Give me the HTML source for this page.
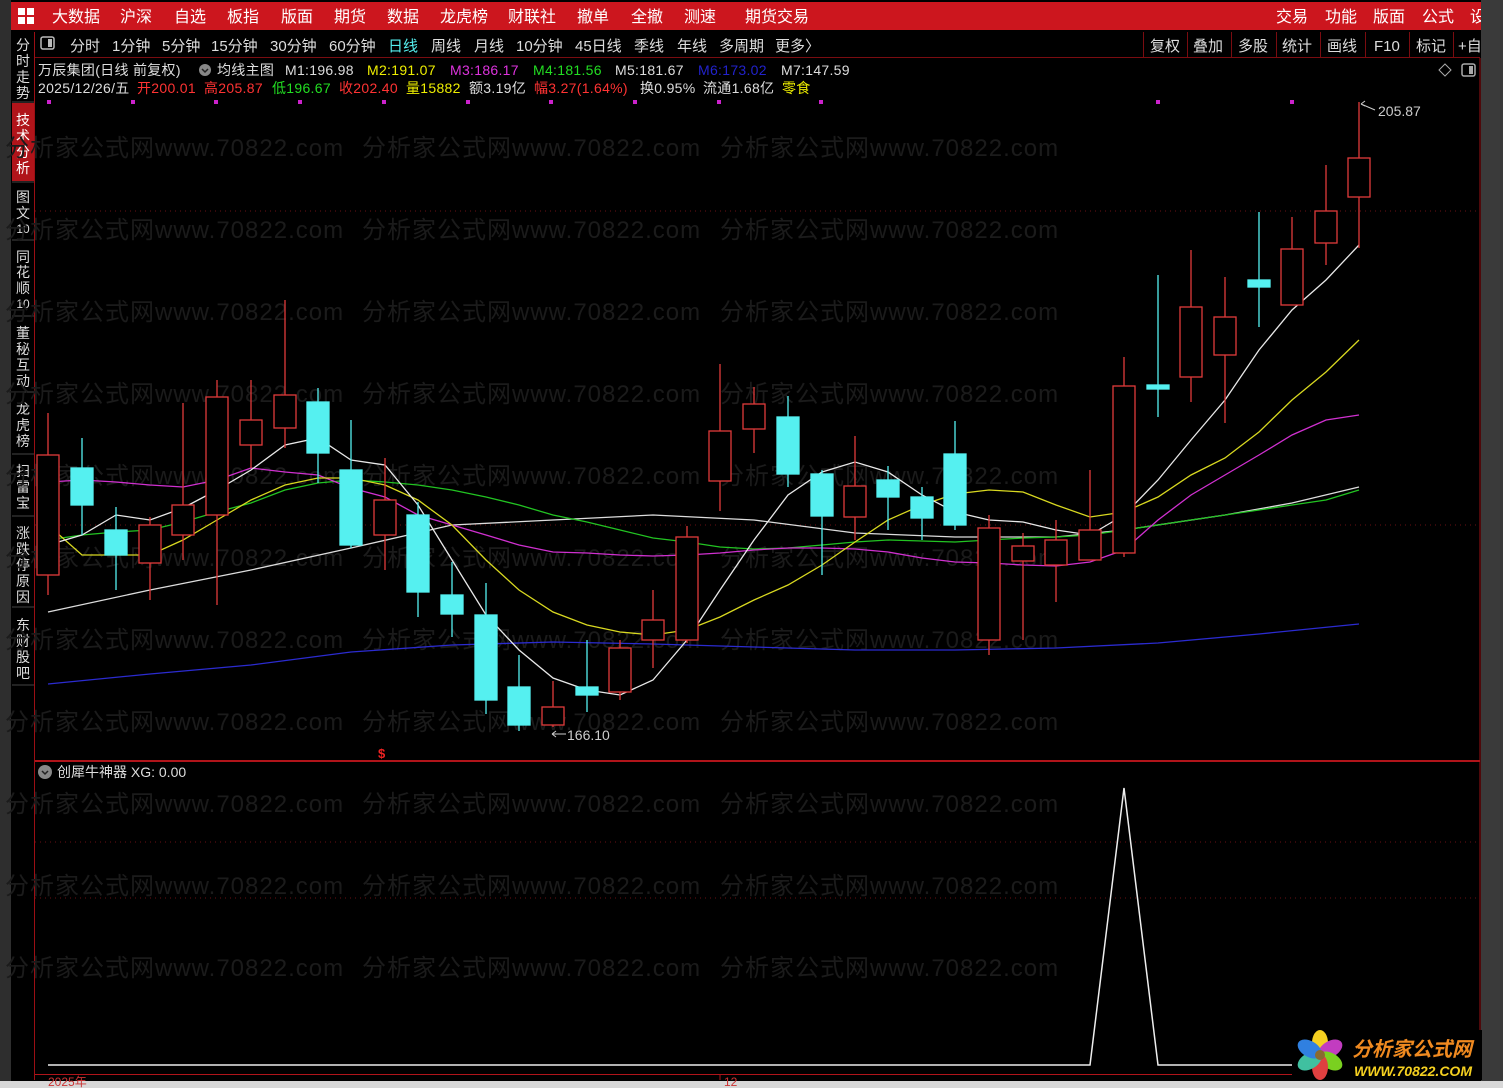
<!DOCTYPE html>
<html><head><meta charset="utf-8">
<style>
html,body{margin:0;padding:0;background:#000;}
body{width:1503px;height:1088px;overflow:hidden;position:relative;font-family:"Liberation Sans","Noto Sans CJK SC",sans-serif;}
svg text{font-family:"Liberation Sans","Noto Sans CJK SC",sans-serif;}
</style></head><body>
<svg width="1503" height="1088" viewBox="0 0 1503 1088" xmlns="http://www.w3.org/2000/svg" style="position:absolute;left:0;top:0">
<rect width="1503" height="1088" fill="#000"/>
<rect x="0" y="0" width="11" height="1088" fill="#2e2e2e"/>
<rect x="1481" y="0" width="22" height="1088" fill="#3a3a3a"/>
<rect x="0" y="1081" width="1503" height="7" fill="#d8d8d8"/>
<!-- top red bar -->
<rect x="11" y="2" width="1470" height="28" fill="#cc161e"/>
<g fill="#fff"><rect x="18" y="8" width="7" height="7"/><rect x="27" y="8" width="7" height="7"/><rect x="18" y="17" width="7" height="7"/><rect x="27" y="17" width="7" height="7"/></g>
<g fill="#fff" font-size="16">
<text x="52" y="22">大数据</text><text x="120" y="22">沪深</text><text x="174" y="22">自选</text><text x="227" y="22">板指</text><text x="281" y="22">版面</text><text x="334" y="22">期货</text><text x="387" y="22">数据</text><text x="440" y="22">龙虎榜</text><text x="508" y="22">财联社</text><text x="577" y="22">撤单</text><text x="631" y="22">全撤</text><text x="684" y="22">测速</text><text x="745" y="22">期货交易</text>
<text x="1276" y="22">交易</text><text x="1325" y="22">功能</text><text x="1373" y="22">版面</text><text x="1422" y="22">公式</text><text x="1470" y="22">设</text>
</g>
<rect x="1481" y="0" width="22" height="32" fill="#3a3a3a"/>
<!-- second bar -->
<line x1="35" y1="57.5" x2="1480" y2="57.5" stroke="#7a0c10"/>
<rect x="41" y="37" width="13" height="12" rx="2" fill="none" stroke="#bbb" stroke-width="1.5"/><rect x="48" y="39" width="4" height="8" fill="#bbb"/>
<g fill="#ddd" font-size="15">
<text x="70" y="51">分时</text><text x="112" y="51">1分钟</text><text x="162" y="51">5分钟</text><text x="211" y="51">15分钟</text><text x="270" y="51">30分钟</text><text x="329" y="51">60分钟</text><text x="388" y="51" fill="#5ee">日线</text><text x="431" y="51">周线</text><text x="474" y="51">月线</text><text x="516" y="51">10分钟</text><text x="575" y="51">45日线</text><text x="634" y="51">季线</text><text x="677" y="51">年线</text><text x="719" y="51">多周期</text><text x="775" y="51">更多〉</text>
<text x="1150" y="51">复权</text><text x="1193" y="51">叠加</text><text x="1238" y="51">多股</text><text x="1282" y="51">统计</text><text x="1327" y="51">画线</text><text x="1374" y="51">F10</text><text x="1416" y="51">标记</text><text x="1458" y="51">+自</text>
</g>
<g stroke="#7a0c10"><line x1="1143.5" y1="32" x2="1143.5" y2="57"/><line x1="1187.5" y1="32" x2="1187.5" y2="57"/><line x1="1231.5" y1="32" x2="1231.5" y2="57"/><line x1="1276.5" y1="32" x2="1276.5" y2="57"/><line x1="1320.5" y1="32" x2="1320.5" y2="57"/><line x1="1365.5" y1="32" x2="1365.5" y2="57"/><line x1="1409.5" y1="32" x2="1409.5" y2="57"/><line x1="1453.5" y1="32" x2="1453.5" y2="57"/></g>
<!-- left sidebar -->
<line x1="34.5" y1="32" x2="34.5" y2="1080" stroke="#9b0f14"/>
<rect x="12" y="103" width="22" height="78" fill="#b0141a"/>
<g fill="#ddd" font-size="14" text-anchor="middle">
<text x="23" y="50">分</text><text x="23" y="66">时</text><text x="23" y="82">走</text><text x="23" y="98">势</text>
<text x="23" y="125" fill="#fff">技</text><text x="23" y="141" fill="#fff">术</text><text x="23" y="157" fill="#fff">分</text><text x="23" y="173" fill="#fff">析</text>
<text x="23" y="202">图</text><text x="23" y="218">文</text><text x="23" y="233" font-size="12">10</text>
<text x="23" y="262">同</text><text x="23" y="277">花</text><text x="23" y="293">顺</text><text x="23" y="308" font-size="12">10</text>
<text x="23" y="338">董</text><text x="23" y="354">秘</text><text x="23" y="370">互</text><text x="23" y="386">动</text>
<text x="23" y="414">龙</text><text x="23" y="430">虎</text><text x="23" y="446">榜</text>
<text x="23" y="476">扫</text><text x="23" y="492">雷</text><text x="23" y="508">宝</text>
<text x="23" y="538">涨</text><text x="23" y="554">跌</text><text x="23" y="570">停</text><text x="23" y="586">原</text><text x="23" y="602">因</text>
<text x="23" y="630">东</text><text x="23" y="646">财</text><text x="23" y="662">股</text><text x="23" y="678">吧</text>
</g>
<g stroke="#444"><line x1="12" y1="102" x2="34" y2="102"/><line x1="12" y1="182" x2="34" y2="182"/><line x1="12" y1="240" x2="34" y2="240"/><line x1="12" y1="316" x2="34" y2="316"/><line x1="12" y1="392" x2="34" y2="392"/><line x1="12" y1="454" x2="34" y2="454"/><line x1="12" y1="516" x2="34" y2="516"/><line x1="12" y1="607" x2="34" y2="607"/><line x1="12" y1="685" x2="34" y2="685"/></g>
<!-- watermark -->
<g fill="#1b1b1b" font-size="24" letter-spacing="1">
<text x="5" y="156">分析家公式网www.70822.com</text><text x="362" y="156">分析家公式网www.70822.com</text><text x="720" y="156">分析家公式网www.70822.com</text>
<text x="5" y="238">分析家公式网www.70822.com</text><text x="362" y="238">分析家公式网www.70822.com</text><text x="720" y="238">分析家公式网www.70822.com</text>
<text x="5" y="320">分析家公式网www.70822.com</text><text x="362" y="320">分析家公式网www.70822.com</text><text x="720" y="320">分析家公式网www.70822.com</text>
<text x="5" y="402">分析家公式网www.70822.com</text><text x="362" y="402">分析家公式网www.70822.com</text><text x="720" y="402">分析家公式网www.70822.com</text>
<text x="5" y="484">分析家公式网www.70822.com</text><text x="362" y="484">分析家公式网www.70822.com</text><text x="720" y="484">分析家公式网www.70822.com</text>
<text x="5" y="566">分析家公式网www.70822.com</text><text x="362" y="566">分析家公式网www.70822.com</text><text x="720" y="566">分析家公式网www.70822.com</text>
<text x="5" y="648">分析家公式网www.70822.com</text><text x="362" y="648">分析家公式网www.70822.com</text><text x="720" y="648">分析家公式网www.70822.com</text>
<text x="5" y="730">分析家公式网www.70822.com</text><text x="362" y="730">分析家公式网www.70822.com</text><text x="720" y="730">分析家公式网www.70822.com</text>
<text x="5" y="812">分析家公式网www.70822.com</text><text x="362" y="812">分析家公式网www.70822.com</text><text x="720" y="812">分析家公式网www.70822.com</text>
<text x="5" y="894">分析家公式网www.70822.com</text><text x="362" y="894">分析家公式网www.70822.com</text><text x="720" y="894">分析家公式网www.70822.com</text>
<text x="5" y="976">分析家公式网www.70822.com</text><text x="362" y="976">分析家公式网www.70822.com</text><text x="720" y="976">分析家公式网www.70822.com</text>
</g>
<!-- frame -->
<line x1="1480" y1="58" x2="1480" y2="1080" stroke="#9b0f14"/>
<line x1="35" y1="761" x2="1480" y2="761" stroke="#b0141a" stroke-width="2"/>
<line x1="35" y1="1074.5" x2="1480" y2="1074.5" stroke="#b0141a"/>
<g stroke="#6a1014" stroke-dasharray="1,4"><line x1="35" y1="211" x2="1480" y2="211"/><line x1="35" y1="525" x2="1480" y2="525"/><line x1="35" y1="842" x2="1480" y2="842"/><line x1="35" y1="898" x2="1480" y2="898"/></g>
<!-- legend -->
<g font-size="14" letter-spacing="0.3">
<text x="38" y="75" fill="#ddd">万辰集团(日线 前复权)</text>
<circle cx="205" cy="70" r="6" fill="#888"/><path d="M202 69l3 3 3-3" stroke="#222" stroke-width="1.5" fill="none"/>
<text x="217" y="75" fill="#ddd">均线主图</text>
<text x="285" y="75" fill="#ddd">M1:196.98</text><text x="367" y="75" fill="#ee0">M2:191.07</text><text x="450" y="75" fill="#d3d">M3:186.17</text><text x="533" y="75" fill="#2d2">M4:181.56</text><text x="615" y="75" fill="#ddd">M5:181.67</text><text x="698" y="75" fill="#22c">M6:173.02</text><text x="781" y="75" fill="#ddd">M7:147.59</text>
<text x="38" y="93" fill="#ddd">2025/12/26/五</text><text x="137" y="93" fill="#f33">开200.01</text><text x="204" y="93" fill="#f33">高205.87</text><text x="272" y="93" fill="#2d2">低196.67</text><text x="339" y="93" fill="#f33">收202.40</text><text x="406" y="93" fill="#ee0">量15882</text><text x="469" y="93" fill="#ddd">额3.19亿</text><text x="534" y="93" fill="#f33">幅3.27(1.64%)</text><text x="640" y="93" fill="#ddd">换0.95%</text><text x="703" y="93" fill="#ddd">流通1.68亿</text><text x="782" y="93" fill="#ee0">零食</text>
</g>
<path d="M1445 64l6 6-6 6-6-6z" fill="none" stroke="#aaa"/>
<rect x="1462" y="64" width="13" height="12" rx="2" fill="none" stroke="#aaa" stroke-width="1.5"/><rect x="1469" y="66" width="4" height="8" fill="#aaa"/>
<g fill="#c2c">
<rect x="47" y="100" width="4" height="4"/><rect x="131" y="100" width="4" height="4"/><rect x="214" y="100" width="4" height="4"/><rect x="298" y="100" width="4" height="4"/><rect x="382" y="100" width="4" height="4"/><rect x="466" y="100" width="4" height="4"/><rect x="549" y="100" width="4" height="4"/><rect x="633" y="100" width="4" height="4"/><rect x="717" y="100" width="4" height="4"/><rect x="819" y="100" width="4" height="4"/><rect x="1156" y="100" width="4" height="4"/><rect x="1290" y="100" width="4" height="4"/>
</g>
<!-- MA lines -->
<g fill="none" stroke-width="1.3">
<polyline stroke="#dcdcdc" points="48,612 150,590 251,570 351,548 452,525 553,520 653,515 754,520 855,533 955,537 1056,537 1124,530 1225,515 1292,503 1359,487"/>
<polyline stroke="#2b2bd0" points="48,684 150,674 251,665 351,652 452,645 553,642 653,644 754,647 855,650 955,650 1056,648 1158,643 1259,634 1359,624"/>
<polyline stroke="#22c322" points="48,540 82,535 116,532 150,530 183,522 217,512 251,503 285,490 318,483 351,480 385,482 418,485 452,490 486,497 519,505 553,515 587,522 620,530 653,538 687,542 720,547 754,549 788,548 822,545 855,542 888,540 922,541 955,542 989,540 1023,538 1056,537 1090,535 1124,530 1158,525 1191,520 1225,515 1259,510 1292,505 1326,500 1359,490"/>
<polyline stroke="#d030d0" points="48,482 82,480 116,482 150,485 183,487 217,480 251,468 285,472 318,475 351,488 385,497 418,515 452,525 486,535 519,545 553,552 587,553 620,555 653,556 687,555 720,553 754,550 788,548 822,548 855,549 888,552 922,558 955,562 989,563 1023,565 1056,566 1090,562 1124,550 1158,520 1191,495 1225,475 1259,455 1292,435 1326,420 1359,415"/>
<polyline stroke="#d8d820" points="48,525 82,555 116,555 150,555 183,540 217,520 251,500 285,485 318,478 351,478 385,485 418,500 452,525 486,560 519,590 553,612 587,625 620,632 653,635 687,630 720,617 754,600 788,585 822,565 855,542 888,520 922,505 955,494 989,490 1023,492 1056,505 1090,517 1124,512 1158,497 1191,475 1225,458 1259,432 1292,400 1326,372 1359,340"/>
<polyline stroke="#e8e8e8" points="48,545 82,535 116,515 150,520 183,508 217,490 251,470 285,445 318,438 351,460 385,465 418,505 452,560 486,615 519,650 553,678 587,690 620,695 653,680 687,640 720,590 754,540 788,495 822,472 855,462 888,472 922,495 955,512 989,520 1023,522 1056,530 1090,535 1124,515 1158,480 1191,440 1225,400 1259,350 1292,310 1326,280 1359,245"/>
</g>
<!-- candles: red hollow -->
<g stroke="#e03a3a" stroke-width="1.3" fill="#000">
<line x1="48" y1="413" x2="48" y2="595"/><rect x="37" y="455" width="22" height="120"/>
<line x1="150" y1="517" x2="150" y2="600"/><rect x="139" y="525" width="22" height="38"/>
<line x1="183" y1="403" x2="183" y2="560"/><rect x="172" y="505" width="22" height="30"/>
<line x1="217" y1="380" x2="217" y2="605"/><rect x="206" y="397" width="22" height="118"/>
<line x1="251" y1="380" x2="251" y2="468"/><rect x="240" y="420" width="22" height="25"/>
<line x1="285" y1="300" x2="285" y2="448"/><rect x="274" y="395" width="22" height="33"/>
<line x1="385" y1="458" x2="385" y2="570"/><rect x="374" y="500" width="22" height="35"/>
<line x1="553" y1="681" x2="553" y2="727"/><rect x="542" y="707" width="22" height="18"/>
<line x1="620" y1="640" x2="620" y2="700"/><rect x="609" y="648" width="22" height="44"/>
<line x1="653" y1="590" x2="653" y2="668"/><rect x="642" y="620" width="22" height="20"/>
<line x1="687" y1="526" x2="687" y2="643"/><rect x="676" y="537" width="22" height="103"/>
<line x1="720" y1="364" x2="720" y2="511"/><rect x="709" y="431" width="22" height="50"/>
<line x1="754" y1="387" x2="754" y2="453"/><rect x="743" y="404" width="22" height="25"/>
<line x1="855" y1="436" x2="855" y2="540"/><rect x="844" y="486" width="22" height="31"/>
<line x1="989" y1="515" x2="989" y2="655"/><rect x="978" y="528" width="22" height="112"/>
<line x1="1023" y1="533" x2="1023" y2="640"/><rect x="1012" y="546" width="22" height="15"/>
<line x1="1056" y1="520" x2="1056" y2="602"/><rect x="1045" y="540" width="22" height="25"/>
<line x1="1090" y1="470" x2="1090" y2="560"/><rect x="1079" y="530" width="22" height="30"/>
<line x1="1124" y1="357" x2="1124" y2="557"/><rect x="1113" y="386" width="22" height="167"/>
<line x1="1191" y1="250" x2="1191" y2="402"/><rect x="1180" y="307" width="22" height="70"/>
<line x1="1225" y1="277" x2="1225" y2="423"/><rect x="1214" y="317" width="22" height="38"/>
<line x1="1292" y1="217" x2="1292" y2="305"/><rect x="1281" y="249" width="22" height="56"/>
<line x1="1326" y1="165" x2="1326" y2="265"/><rect x="1315" y="211" width="22" height="32"/>
<line x1="1359" y1="102" x2="1359" y2="248"/><rect x="1348" y="158" width="22" height="39"/>
</g>
<!-- cyan -->
<g stroke="#55f0f0" stroke-width="1.3" fill="#55f0f0">
<line x1="82" y1="438" x2="82" y2="535"/><rect x="71" y="468" width="22" height="37"/>
<line x1="116" y1="507" x2="116" y2="590"/><rect x="105" y="530" width="22" height="25"/>
<line x1="318" y1="388" x2="318" y2="483"/><rect x="307" y="402" width="22" height="51"/>
<line x1="351" y1="420" x2="351" y2="548"/><rect x="340" y="470" width="22" height="75"/>
<line x1="418" y1="502" x2="418" y2="617"/><rect x="407" y="515" width="22" height="77"/>
<line x1="452" y1="562" x2="452" y2="637"/><rect x="441" y="595" width="22" height="19"/>
<line x1="486" y1="583" x2="486" y2="714"/><rect x="475" y="615" width="22" height="85"/>
<line x1="519" y1="655" x2="519" y2="731"/><rect x="508" y="687" width="22" height="38"/>
<line x1="587" y1="640" x2="587" y2="712"/><rect x="576" y="687" width="22" height="8"/>
<line x1="788" y1="396" x2="788" y2="487"/><rect x="777" y="417" width="22" height="57"/>
<line x1="822" y1="470" x2="822" y2="575"/><rect x="811" y="474" width="22" height="42"/>
<line x1="888" y1="466" x2="888" y2="530"/><rect x="877" y="480" width="22" height="17"/>
<line x1="922" y1="487" x2="922" y2="540"/><rect x="911" y="497" width="22" height="21"/>
<line x1="955" y1="421" x2="955" y2="530"/><rect x="944" y="454" width="22" height="71"/>
<line x1="1158" y1="275" x2="1158" y2="417"/><rect x="1147" y="385" width="22" height="4"/>
<line x1="1259" y1="212" x2="1259" y2="327"/><rect x="1248" y="280" width="22" height="7"/>
</g>
<text x="1378" y="116" fill="#ccc" font-size="14">205.87</text>
<path d="M1361 104l14 6M1361 104l4 -3M1361 104l4 2" stroke="#ccc" fill="none"/>
<text x="567" y="740" fill="#ccc" font-size="14">166.10</text>
<path d="M552 734h14M552 734l4 -3M552 734l4 3" stroke="#ccc" fill="none"/>
<text x="378" y="758" fill="#e22" font-size="13" font-weight="bold">$</text>
<!-- lower panel -->
<circle cx="45" cy="772" r="7" fill="#888"/><path d="M42 771l3 3 3-3" stroke="#222" stroke-width="1.5" fill="none"/>
<text x="57" y="777" fill="#ddd" font-size="14">创犀牛神器 XG: 0.00</text>
<polyline fill="none" stroke="#eee" stroke-width="1.5" points="48,1065 1090,1065 1124,788 1158,1065 1300,1065"/>
<line x1="720" y1="1074" x2="720" y2="1080" stroke="#b0141a"/>
<text x="48" y="1086" fill="#c33" font-size="12">2025年</text>
<text x="724" y="1086" fill="#c33" font-size="12">12</text>
<!-- logo -->
<rect x="1292" y="1030" width="190" height="50" fill="#000"/>
<g transform="translate(1320,1055)">
<ellipse rx="8" ry="13" cy="-12" fill="#f5d020"/>
<ellipse rx="8" ry="13" cy="-12" fill="#c23cc0" transform="rotate(60)"/>
<ellipse rx="8" ry="13" cy="-12" fill="#7ad020" transform="rotate(120)"/>
<ellipse rx="8" ry="13" cy="-12" fill="#e04040" transform="rotate(180)"/>
<ellipse rx="8" ry="13" cy="-12" fill="#40c0a0" transform="rotate(240)"/>
<ellipse rx="8" ry="13" cy="-12" fill="#3080e0" transform="rotate(300)"/>
<circle r="5" fill="#8a6a30"/>
</g>
<text x="1352" y="1056" fill="#f08a20" font-size="20" font-weight="bold" font-style="italic">分析家公式网</text>
<text x="1354" y="1076" fill="#f5d020" font-size="14" font-weight="bold" font-style="italic">WWW.70822.COM</text>
</svg>
</body></html>
